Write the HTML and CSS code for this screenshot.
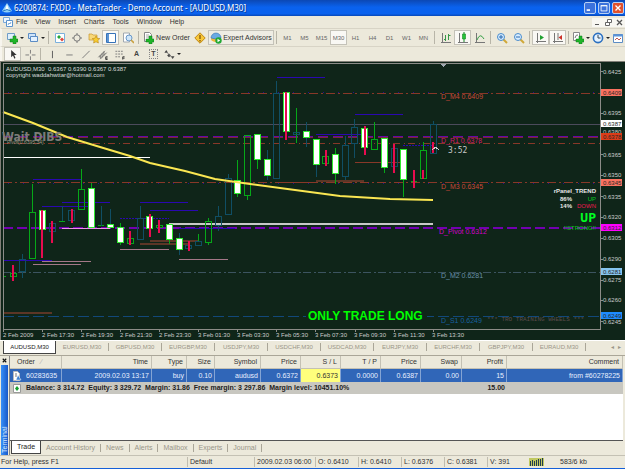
FILE: index.html
```html
<!DOCTYPE html>
<html lang="en">
<head>
<meta charset="utf-8">
<title>6200874: FXDD - MetaTrader - Demo Account - [AUDUSD,M30]</title>
<link rel="stylesheet" href="styles.css">
</head>
<body>
<div class="app">
  <header class="titlebar">
    <svg class="logo" viewBox="0 0 10 10"><path d="M5 0L10 8Q5 11 0 8Z" fill="#8fd0f8"/><path d="M5 1L7 7H3Z" fill="#fff"/><path d="M1 8Q5 5 9 8" stroke="#2878c0" fill="none"/></svg>
    <h1>6200874: FXDD - MetaTrader - Demo Account - [AUDUSD,M30]</h1>
    <button class="win" aria-label="Minimize"><svg viewBox="0 0 12 12"><path d="M2 8.500h4" stroke="#fff" stroke-width="2"/></svg></button>
    <button class="win" aria-label="Maximize"><svg viewBox="0 0 12 12"><path d="M2.500 3h7v6.500h-7zM2 3.500h8" stroke="#fff" fill="none"/></svg></button>
    <button class="win close" aria-label="Close"><svg viewBox="0 0 12 12"><path d="M3 3l6 6M9 3l-6 6" stroke="#fff" stroke-width="1.600"/></svg></button>
  </header>

  <nav class="menu">
    <svg class="docicon" viewBox="0 0 10 10"><path d="M.5.500h6v5h-6z" fill="#eef6ff" stroke="#7aa8d8"/><path d="M3.500 3.500h6v6h-6z" fill="#fff" stroke="#5c94cc"/><path d="M5 8l1-2 1 1 1-2" stroke="#78a8d8" fill="none"/></svg>
    <button>File</button><button>View</button><button>Insert</button><button>Charts</button><button>Tools</button><button>Window</button><button>Help</button>
    <span class="docwin">
      <button aria-label="Minimize chart"><svg viewBox="0 0 9 9"><path d="M2 6.500h4" stroke="#555"/></svg></button>
      <button aria-label="Restore chart"><svg viewBox="0 0 9 9"><path d="M3.500 1.500h4v3h-4zM1.500 4.500h4v3h-4z" stroke="#666" fill="#fff"/></svg></button>
      <button aria-label="Close chart"><svg viewBox="0 0 9 9"><path d="M2 2l5 5M7 2l-5 5" stroke="#555" stroke-width="1.300"/></svg></button>
    </span>
  </nav>

  <div class="toolbar">
    <button class="drop" aria-label="New chart"><svg viewBox="0 0 12 12"><path d="M1.500 1.500h7v6h-7z" fill="#dff0fc" stroke="#6f9cc8"/><path d="M4 7h3V4h3v3h2v3h-2v2H7v-2H4z" fill="#1fb428" stroke="#0c7a18" stroke-width=".5"/></svg><i></i></button>
    <button class="drop" aria-label="Profiles"><svg viewBox="0 0 12 12"><path d="M1.500 1.500h7v5h-7z" fill="#cfe4fa" stroke="#5b8cc4"/><path d="M3.500 4.500h7v5h-7z" fill="#e4f1ff" stroke="#5b8cc4"/></svg><i></i></button>
    <span class="sep"></span>
    <button aria-label="Market watch"><svg viewBox="0 0 12 12"><path d="M1.500 1.500h9v9h-9z" fill="#fff" stroke="#7ab0dc"/><path d="M3 5l2-2 2 2-2 2z" fill="#25a63a"/><path d="M6 7.500l2-2 2 2-2 2z" fill="#e0483c"/></svg></button>
    <button aria-label="Data window"><svg viewBox="0 0 12 12"><path d="M6 1v10M1 6h10" stroke="#777"/><circle cx="6" cy="6" r="3.200" fill="#ece9dc" stroke="#777"/></svg></button>
    <button aria-label="Navigator"><svg viewBox="0 0 12 12"><path d="M1 2h3l1 1h4v5H1z" fill="#f8d878" stroke="#c89830" stroke-width=".7"/><path d="M8 4l1.200 2.300 2.600.3-1.900 1.800.5 2.600L8 9.800 5.600 11l.5-2.600-1.900-1.800 2.600-.3z" fill="#f8cc30" stroke="#b98414" stroke-width=".6"/></svg></button>
    <button class="on" aria-label="Terminal"><svg viewBox="0 0 12 12"><path d="M1.500 1.500h9v9h-9z" fill="#fff" stroke="#3672b8"/><path d="M2 2h2v8H2z" fill="#5c94d4"/></svg></button>
    <button aria-label="Strategy tester"><svg viewBox="0 0 12 12"><path d="M1.500 1v9h6V1z" fill="#fff" stroke="#a0a8b0"/><circle cx="7" cy="6" r="3" fill="#cfe6fa" stroke="#6a98c8"/><path d="M9 8l3 3" stroke="#c8a040" stroke-width="1.600"/></svg></button>
    <span class="sep"></span>
    <button class="order"><svg viewBox="0 0 12 12"><path d="M2.500.500h5l2 2v7h-7z" fill="#fff" stroke="#888"/><path d="M4 3h3M4 5h3" stroke="#aaa"/><path d="M4 7h3V4h3v3h2v3h-2v2H7v-2H4z" fill="#1fb428" stroke="#0c7a18" stroke-width=".5"/></svg>New Order</button>
    <button aria-label="MetaEditor"><svg viewBox="0 0 12 12"><path d="M6 .8L11.200 6 6 11.200.8 6z" fill="#f8c838" stroke="#c08818"/><path d="M6 3v4M6 8v1.500" stroke="#8a5c10" stroke-width="1.400"/></svg></button>
    <button class="expert on"><svg viewBox="0 0 12 12"><ellipse cx="6" cy="7" rx="5" ry="3" fill="#f0b838"/><path d="M1 6a5 5 0 0 1 10 0q-5 2-10 0" fill="#6aaae4" stroke="#3872b4" stroke-width=".6"/><circle cx="8.500" cy="8.500" r="3.200" fill="#22a834"/><path d="M7.500 6.800v3.400l2.700-1.700z" fill="#fff"/></svg>Expert Advisors</button>
    <span class="sep"></span>
    <button class="tf">M1</button><button class="tf">M5</button><button class="tf">M15</button><button class="tf on">M30</button><button class="tf">H1</button><button class="tf">H4</button><button class="tf">D1</button><button class="tf">W1</button><button class="tf">MN</button>
    <span class="sep"></span>
    <button aria-label="Bar chart"><svg viewBox="0 0 12 12"><path d="M2.500 1v10M1 10.500h10" stroke="#777"/><path d="M5.500 3v6M4 7.500h1.500M8.500 2v6M8.500 3.500h2" stroke="#389848" fill="none"/></svg></button>
    <button class="on" aria-label="Candlesticks"><svg viewBox="0 0 12 12"><path d="M2.500 1v10M1 10.500h10" stroke="#777"/><path d="M7 0v10" stroke="#148824"/><path d="M5.500 2h3v5h-3z" fill="#25c438" stroke="#148824" stroke-width=".6"/></svg></button>
    <button aria-label="Line chart"><svg viewBox="0 0 12 12"><path d="M2.500 1v10M1 10.500h10" stroke="#777"/><path d="M3 8Q6 0 10 7" stroke="#38a048" fill="none"/></svg></button>
    <span class="sep"></span>
    <button aria-label="Zoom in"><svg viewBox="0 0 12 12"><path d="M7 7l4 4" stroke="#d0a838" stroke-width="2"/><circle cx="5" cy="5" r="3.500" fill="#d8edff" stroke="#4a8ccc"/><path d="M3 5h4M5 3v4" stroke="#2868b0"/></svg></button>
    <button aria-label="Zoom out"><svg viewBox="0 0 12 12"><path d="M7 7l4 4" stroke="#d0a838" stroke-width="2"/><circle cx="5" cy="5" r="3.500" fill="#d8edff" stroke="#4a8ccc"/><path d="M3 5h4" stroke="#2868b0"/></svg></button>
    <span class="sep"></span>
    <button class="on" aria-label="Auto scroll"><svg viewBox="0 0 12 12"><path d="M2.500 1v10M1 9.500h10" stroke="#777"/><path d="M5 3l4 2.500L5 8z" fill="#20a030"/></svg></button>
    <button class="on" aria-label="Chart shift"><svg viewBox="0 0 12 12"><path d="M2.500 1v10M1 9.500h10M6 1v7" stroke="#777"/><path d="M10 3L6.500 5.500 10 8z" fill="#cc3028"/></svg></button>
    <span class="sep"></span>
    <button class="drop" aria-label="Indicators"><svg viewBox="0 0 12 12"><path d="M1.500.500h6v8h-6z" fill="#fff" stroke="#888"/><path d="M3 6q1-4 3-3" stroke="#777" fill="none"/><path d="M4 7h3V4h3v3h2v3h-2v2H7v-2H4z" fill="#1fb428" stroke="#0c7a18" stroke-width=".5"/></svg><i></i></button>
    <button class="drop" aria-label="Periods"><svg viewBox="0 0 12 12"><circle cx="6" cy="6" r="4.600" fill="#e4f2ff" stroke="#2c70c0" stroke-width="1.600"/><path d="M6 3v3h2.500" stroke="#345" fill="none"/></svg><i></i></button>
    <button class="drop" aria-label="Templates"><svg viewBox="0 0 12 12"><path d="M1.500 2.500h9v8h-9z" fill="#fff" stroke="#5c8cc4"/><path d="M1 3.500h10" stroke="#5c94d8" stroke-width="2"/><path d="M3 8l2-2 2 2 2-2" stroke="#c05850" fill="none"/></svg><i></i></button>
  </div>

  <div class="toolbar draw">
    <button class="on" aria-label="Cursor"><svg viewBox="0 0 12 12"><path d="M4 1v8l2-2 1.500 3.500 1.200-.6L7.300 6.500H10z" fill="#333"/></svg></button>
    <button aria-label="Crosshair"><svg viewBox="0 0 12 12"><path d="M6.500 1v4M6.500 8v4M1 6.500h4M8 6.500h4" stroke="#777"/></svg></button>
    <span class="sep"></span>
    <button aria-label="Vertical line"><svg viewBox="0 0 12 12"><path d="M6.500 2v8" stroke="#555"/></svg></button>
    <button aria-label="Horizontal line"><svg viewBox="0 0 12 12"><path d="M3 6.500h7" stroke="#777"/></svg></button>
    <button aria-label="Trendline"><svg viewBox="0 0 12 12"><path d="M2 10l8-8" stroke="#777"/></svg></button>
    <button aria-label="Channel"><svg viewBox="0 0 12 12"><path d="M1 9l7-7M3 11l7-7M3 7v3M5 5v4M7 3v4" stroke="#666" fill="none"/><path d="M11 8.500H9v3h2M9 10h2" stroke="#333" fill="none"/></svg></button>
    <button aria-label="Fibonacci"><svg viewBox="0 0 12 12"><path d="M1 2.500h9M1 5.500h9M1 8.500h6" stroke="#777" stroke-dasharray="2 1"/><path d="M11 8.500H9v3M9 10h2" stroke="#333" fill="none"/></svg></button>
    <button class="letter" aria-label="Text">A</button>
    <button class="letter" aria-label="Text label"><span class="boxed">T</span></button>
    <button class="drop" aria-label="Arrows"><svg viewBox="0 0 12 12"><path d="M3 1l2 3H1zM6 5l2 2-2 2-2-2zM10 11L8 8h4z" fill="#444"/><path d="M4 4l5 5" stroke="#777"/></svg><i></i></button>
  </div>

  <main class="chart">
    <svg viewBox="0 61 625 279" role="img" aria-label="AUDUSD M30 candlestick chart">
      <path class="bg" d="M0 61h625v279H0z"/>
      <path class="edge" d="M.5 61v279M0 61.500h625"/>
      <g class="levels">
        <path class="red" stroke-dasharray="9 3 2 3" d="M3 93.500h597M3 182.500h597"/>
        <path class="blue dim" stroke-dasharray="1 14" d="M8 92.500h592M8 183.500h592"/>
        <path class="bid" d="M3 124.500h597"/>
        <path class="violet" stroke-dasharray="10 5" d="M3 136.500h597"/>
        <path class="maroon" stroke-dasharray="10 5" d="M3 137.500h597"/>
        <path class="red" stroke-dasharray="7 4 1 3" d="M3 143.500h597"/>
        <path class="violet strong" stroke-dasharray="10 4" d="M3 228h597"/>
        <path class="slate" stroke-dasharray="8 3 2 2" d="M3 272.500h597"/>
        <path class="steel" stroke-dasharray="11 4" d="M3 316.500h597"/>
      </g>
      <g class="signals">
        <path class="blue" d="M33 179.500h48M42 206.500h49M62 202.500h48M3 260.500h49M140 202.500h48M150 210.500h48M277 77.500h48M316 134.500h48M355 114.500h48M179 228.500h56"/>
        <path class="blue" stroke-dasharray="2 1" d="M120 218.500h49M403 145.500h30"/>
        <path class="mauve" d="M42 261.500h49M33 264.500h48M120 249.500h49M179 259.500h49"/>
        <path class="brown" d="M3 313h49M140 244h48M150 241h48M316 181h48"/>
        <path class="red" d="M355 162.500h48M277 182.500h39"/>
        <path class="pink" d="M62 228.500h48"/>
        <path class="white" d="M3 157.500h147"/>
        <path class="silver" d="M169 224h264"/>
      </g>
      <g class="candles">
        <path class="up" d="M3.500 264v45M3 276.500h3M32.500 184v28M29.500 212.500h6v46h-6zM10.500 273.500h6v3h-6zM59 221.500h6M81.500 169v20M78.500 189.500h6v20h-6zM98 225.500h6M127.500 238.500h6v5h-6zM156.500 225.500h6v2h-6zM195.500 245.500h6M198.500 234v7M205.500 221.500h6v21h-6zM208.500 218v3M208.500 243v2M225 178.500h6M225 214.500h6M244.500 135.500h6v60h-6zM247.500 196v4M273.500 93.500h6M273.500 178.500h6M296.500 108v35M322.500 156.500h6v7h-6zM371.500 139.500h6v10h-6zM374.500 122v17M410.500 181.500h6M420.500 150.500h6v28h-6zM423.500 142v8M430.500 124.500h6"/>
        <path class="teal" d="M22.500 254v5M22.500 272v6M19.500 259.500h6v12h-6zM49.500 223.500h6v8h-6zM62.500 206v15M68.500 210.500h6v10h-6zM101.500 206v20M110.500 209v19M140.500 206v12M137.500 218.500h6v21h-6zM185.500 245.500h6v3h-6zM195.500 241.500h6v4h-6zM218.500 206v10M218.500 225v6M215.500 216.500h6v9h-6zM228.500 174v4M225.500 178.500h6v36h-6zM276.500 81v12M273.500 93.500h6v85h-6zM293.500 132.500h6v2h-6zM306.500 122v25M316.500 165v12M342.500 145.500h6v31h-6zM345.500 136v9M345.500 176v4M351.500 127.500h6v16h-6zM354.500 119v8M354.500 144v14M391.500 148.500h6v18h-6zM413.500 177v7M430.500 124.500h6v29h-6zM433.500 121v3M179.500 233v22M267.500 150v30"/>
        <path class="up" d="M91.500 183v5M120.500 223v22M169.500 240v4M237.500 160v37M257.500 160v9M335.500 148v36M384.500 167v6M403.500 180v17M286.500 92v40"/>
        <path class="down" d="M88.500 188.500h6v39h-6zM39.500 210.500h6v19h-6zM107.500 224.500h6v3h-6zM117.500 227.500h6v15h-6zM146.500 216.500h6v12h-6zM166.500 224.500h6v15h-6zM176.500 238.500h6v11h-6zM234.500 180.500h6v13h-6zM254.500 134.500h6v25h-6zM264.500 159.500h6v16h-6zM283.500 92.500h6v39h-6zM303.500 131.500h6v6h-6zM313.500 139.500h6v25h-6zM332.500 154.500h6v19h-6zM361.500 128.500h6v19h-6zM381.500 138.500h6v29h-6zM400.500 149.500h6v30h-6z"/>
        <path class="alert" d="M13 265v16M42 210v48M52 221v22M72 209v14M130 231v14M150 214v23M159 220v13M189 241v10M286 92v48M326 150v16M365 126v29M394 144v29M414 170v18M423 170v9M433 142v11"/>
      </g>
      <path class="average" d="M3 112L33 123 67 137 100 147 130 156 150 163 185 171 215 179 250 184 280 188 310 192 340 196 390 199 433 200"/>
      <path class="axis" d="M3.500 329V63.500H600.500V329.500H3M600 71.500h3M600 113.500h3M600 154.500h3M600 175.500h3M600 196.500h3M600 217.500h3M600 238.500h3M600 259.500h3M600 280.500h3M600 300.500h3M600 321.500h3M3.500 329v3M42.500 329v3M81.500 329v3M120.500 329v3M159.500 329v3M198.500 329v3M237.500 329v3M276.500 329v3M315.500 329v3M355.500 329v3M394.500 329v3M433.500 329v3"/>
      <path d="M441 64h5l-2.500 3z" fill="#a0a8b0"/>
      <g class="info">
        <text x="6" y="71">AUDUSD,M30&#160; 0.6367 0.6390 0.6367 0.6387</text>
        <text x="6" y="77">copyright waddahwttar@hotmail.com</text>
      </g>
      <text class="dibs" x="2" y="141">Wait DIBS</text>
      <text class="pips" x="7" y="144">Pivot(0.6395,34)</text>
      <g class="pivots">
        <text class="salmon" x="441" y="99">D_M4 0.6409</text>
        <text class="crimson" x="441" y="143">D_R1 0.6378</text>
        <text class="salmon" x="441" y="189">D_M3 0.6345</text>
        <text class="magenta" x="439" y="234">D_Pivot 0.6312</text>
        <text class="slatetext" x="441" y="278">D_M2 0.6281</text>
        <text class="steeltext" x="441" y="323">D_S1 0.6249</text>
      </g>
      <path d="M432 150l4-3 3 3M436 147v2" stroke="#ccc" fill="none"/>
      <text class="clock" x="448" y="153">3:52</text>
      <g class="trend">
        <text x="596" y="193">rPanel_TREND</text>
        <text x="572" y="201">86%</text><text class="lime" x="596" y="201">UP</text>
        <text x="572" y="208">14%</text><text class="rose" x="596" y="208">DOWN</text>
        <text class="big" x="596" y="222">UP</text>
        <text class="lime" x="596" y="230">!!STRONG!!</text>
      </g>
      <text class="wheels" x="487" y="321">*** TRO TRAINING WHEELS ***</text>
      <path class="bg" d="M306 310h121v12H306z"/>
      <text class="only" x="308" y="320">ONLY TRADE LONG</text>
      <g class="scale">
        <text x="603" y="74">0.6425</text><text x="603" y="115">0.6395</text><text x="603" y="134">0.6380</text><text x="603" y="157">0.6365</text><text x="603" y="177">0.6350</text><text x="603" y="199">0.6335</text><text x="603" y="219">0.6320</text><text x="603" y="240">0.6305</text><text x="603" y="261">0.6290</text><text x="603" y="282">0.6275</text><text x="603" y="302">0.6260</text><text x="603" y="324">0.6245</text>
        <path fill="#fa7260" d="M601 89h21v7h-21zM601 179h21v7h-21z"/>
        <path fill="#fff" d="M601 120h21v7h-21z"/>
        <path fill="#dc3c18" d="M601 133h21v7h-21z"/>
        <path fill="#f0f" d="M601 224h21v7h-21z"/>
        <path fill="#86c4f0" d="M601 268h21v7h-21z"/>
        <path fill="#1e8cff" d="M601 312h21v7h-21z"/>
        <g class="tags"><text x="603" y="95">0.6409</text><text x="603" y="126">0.6387</text><text x="603" y="139">0.6378</text><text x="603" y="185">0.6345</text><text x="603" y="230">0.6312</text><text x="603" y="274">0.6281</text><text x="603" y="318">0.6249</text></g>
        <text x="3" y="337">2 Feb 2009</text><text x="42" y="337">2 Feb 17:30</text><text x="81" y="337">2 Feb 19:30</text><text x="120" y="337">2 Feb 21:30</text><text x="159" y="337">2 Feb 23:30</text><text x="198" y="337">3 Feb 01:30</text><text x="237" y="337">3 Feb 03:30</text><text x="276" y="337">3 Feb 05:30</text><text x="315" y="337">3 Feb 07:30</text><text x="354" y="337">3 Feb 09:30</text><text x="393" y="337">3 Feb 11:30</text><text x="432" y="337">3 Feb 13:30</text>
      </g>
    </svg>
  </main>

  <nav class="charttabs">
    <button class="active">AUDUSD,M30</button><button>EURUSD,M30</button><button>GBPUSD,M30</button><button>EURGBP,M30</button><button>USDJPY,M30</button><button>USDCHF,M30</button><button>USDCAD,M30</button><button>EURJPY,M30</button><button>EURCHF,M30</button><button>GBPJPY,M30</button><button>EURAUD,M30</button>
    <span class="scroll"><button aria-label="Scroll left">◂</button><button aria-label="Scroll right">▸</button></span>
  </nav>

  <section class="terminal">
    <aside class="side"><button aria-label="Close terminal"><svg viewBox="0 0 8 8"><path d="M2 2l4 4M6 2l-4 4" stroke="#111" stroke-width="1.300"/></svg></button><span>Terminal</span></aside>
    <div class="panel">
      <table>
        <colgroup><col class="c52"><col class="c90"><col class="c35"><col class="c28"><col class="c46"><col class="c40"><col class="c40"><col class="c40"><col class="c40"><col class="c41"><col class="c45"><col></colgroup>
        <thead><tr><th class="first">Order <span class="sort">∕</span></th><th>Time</th><th>Type</th><th>Size</th><th>Symbol</th><th>Price</th><th>S / L</th><th>T / P</th><th>Price</th><th>Swap</th><th>Profit</th><th>Comment</th></tr></thead>
        <tbody>
          <tr class="trade"><td class="first"><svg viewBox="0 0 10 10"><path d="M1.500.500h4l2 2v7h-6z" fill="#fff" stroke="#bbb"/><path d="M3 3h2M3 5h2" stroke="#777"/><path d="M6 4l3 5H4z" fill="#3c80d0" stroke="#fff" stroke-width=".5"/></svg>60283635</td><td>2009.02.03 13:17</td><td>buy</td><td>0.10</td><td>audusd</td><td>0.6372</td><td class="stop">0.6373</td><td>0.0000</td><td>0.6387</td><td>0.00</td><td>15</td><td>from #60278225</td></tr>
          <tr class="balance"><td class="first" colspan="10"><svg viewBox="0 0 10 10"><path d="M1.500 1.500h7v8h-7z" fill="#fff" stroke="#999"/><path d="M5 3l2 2.500L5 8 3 5.500z" fill="#18a030"/></svg>Balance: 3 314.72&#160; Equity: 3 329.72&#160; Margin: 31.86&#160; Free margin: 3 297.86&#160; Margin level: 10451.10%</td><td>15.00</td><td></td></tr>
        </tbody>
      </table>
      <div class="blank"></div>
      <nav class="termtabs"><button class="active">Trade</button><button>Account History</button><button>News</button><button>Alerts</button><button>Mailbox</button><button>Experts</button><button>Journal</button></nav>
    </div>
  </section>

  <footer class="status">
    <span class="help">For Help, press F1</span><span class="profile">Default</span><span class="date">2009.02.03 06:00</span><span class="ohlc">O: 0.6410</span><span class="ohlc">H: 0.6410</span><span class="ohlc">L: 0.6376</span><span class="ohlc">C: 0.6381</span><span class="vol">V: 391</span>
    <svg class="net" viewBox="0 0 15 8"><path d="M0 0h15v8H0z" fill="#c0c860"/><path d="M1.500 8V3M3.500 8V2M5.500 8V3M7.500 8V2M9.500 8V1M11.500 8V1M13.500 8V0" stroke="#203c50"/></svg>
    <span class="traffic">583/6 kb</span>
  </footer>
</div>
</body>
</html>
```
FILE: styles.css
```css
* { box-sizing: border-box; }
html, body { margin: 0; height: 100%; overflow: hidden; }
body { background: #ece9db; color: #333; font: 7px/8px "Liberation Sans", Arial, sans-serif; }
button { border: 0; margin: 0; padding: 0; background: none; color: inherit; font: inherit; white-space: nowrap; }
svg { display: block; flex: none; }
.app { display: flex; flex-direction: column; min-height: 100%; border-bottom: 1px solid #1560d8; }

.titlebar { display: flex; align-items: center; height: 16px; padding: 0 1px 0 2px; gap: 2px; background: linear-gradient(#0c48b4, #0a62ee 45%, #0a62ee 85%, #0848b8); color: #fff; }
.titlebar h1 { flex: 1; margin: 0; font: 8px/12px "Noto Sans", sans-serif; text-shadow: 1px 1px #0a3a90; }
.logo { width: 10px; height: 10px; }
.win { width: 12px; height: 12px; border: 1px solid #b8d0f4; border-radius: 2px; background: #3c72dc; }
.win svg { width: 10px; height: 10px; }
.win.close { background: #e0502c; }

.menu { display: flex; align-items: center; gap: 8px; height: 12px; padding-left: 3px; }
.docicon { width: 10px; height: 10px; margin-right: -5px; }
.docwin { display: flex; gap: 2px; margin-left: auto; background: #f8f7f2; padding: 0 1px; }
.docwin svg { width: 9px; height: 9px; }

.toolbar { display: flex; height: 18px; padding: 1px 0 1px 2px; overflow: hidden; border-top: 1px solid #d8d4c6; border-left: 2px solid #f7f5ee; }
.toolbar button { display: flex; align-items: center; justify-content: center; flex: none; width: 17px; height: 15px; }
.toolbar svg { width: 12px; height: 12px; }
.toolbar .on { background: #f9f8f4; border: 1px solid #c4c2b8; }
.toolbar .drop { width: 21px; gap: 2px; }
.toolbar .drop:nth-last-child(-n+3) { width: 20px; }
.drop i { border: 2px solid transparent; border-top-color: #222; border-bottom: 0; }
.sep { flex: none; width: 1px; margin: 1px 2px; background: #b8b5a8; }
.toolbar .order { width: 50px; gap: 2px; }
.toolbar .expert { width: 66px; gap: 1px; background: #efede4; }
.toolbar .tf { color: #666; font-size: 6px; }
.toolbar.draw { height: 15px; padding-top: 0; padding-bottom: 0; }
.toolbar.draw button { height: 14px; }
.toolbar.draw svg { height: 11px; }
.letter { color: #444; font-weight: bold; }
.boxed { padding: 0 1px; border: 1px dotted #888; }

.chart svg { width: 100%; height: auto; }
.bg { fill: #0f2519; }
.chart path { shape-rendering: crispEdges; }
.edge { stroke: #807e76; }
.levels path, .signals path, .candles path { fill: none; }
.red { stroke: #883828; }
.blue { stroke: #2a08b0; }
.dim { opacity: .8; }
.bid { stroke: #4c4b5c; }
.violet { stroke: #6408a8; }
.violet.strong { stroke: #7200b0; stroke-width: 2; }
.maroon { stroke: #7c2838; }
.slate { stroke: #3c5460; }
.steel { stroke: #12487a; }
.mauve { stroke: #a47888; }
.brown { stroke: #5c3626; stroke-width: 2; }
.pink { stroke: #ee90e8; }
.white { stroke: #fff; }
.silver { stroke: #c8c8c8; stroke-width: 2; }
.up { stroke: #06a818; }
.teal { stroke: #104e64; }
.candles .down { stroke: #30e830; fill: #fff; }
.alert { stroke: #e80c50; stroke-width: 2; }
.chart .average { fill: none; stroke: #fae652; stroke-width: 2; shape-rendering: auto; }
.axis { fill: none; stroke: #8c8c88; }
.info { fill: #ddd; font-size: 6px; }
.pips { fill: #a09888; font-size: 5px; }
.dibs { fill: #7c7c78; font: bold 12px "DejaVu Sans Condensed", sans-serif; }
.pivots { font-size: 7px; }
.salmon { fill: #c84838; }
.crimson { fill: #d01868; }
.magenta { fill: #d000c8; }
.slatetext { fill: #6890a8; }
.steeltext { fill: #1860a0; }
.clock { fill: #c8c8c8; font: 8px "DejaVu Sans Mono", monospace; }
.trend { fill: #e8e8e8; text-anchor: end; font: bold 6px "Liberation Sans", sans-serif; }
.trend .lime { fill: #08c820; font-weight: normal; }
.rose { fill: #f01850; font-weight: normal; }
.trend .big { fill: #0f2; font: bold 13px "DejaVu Sans Mono", monospace; }
.wheels { fill: #5c4c4c; font: 6px "Liberation Mono", monospace; }
.only { fill: #0f0; font: bold 12px "Liberation Sans", sans-serif; }
.scale { fill: #ccc; font-size: 6px; }
.tags { fill: #282828; }

.charttabs { display: flex; align-items: center; height: 15px; padding: 0 4px 2px 3px; border-top: 1px solid #fff; color: #999587; font-size: 6px; }
.charttabs button { flex: none; width: 53px; border-right: 1px solid #aaa698; line-height: 8px; }
.charttabs .active { height: 13px; background: #fff; color: #222; border: 1px solid #444; border-top: 0; }
.scroll { display: flex; margin-left: auto; gap: 4px; }
.charttabs .scroll button { width: auto; border: 0; }

.terminal { display: flex; flex: 1; border-top: 1px solid #aaa698; padding-right: 2px; }
.side { display: flex; flex-direction: column; width: 8px; margin-right: 1px; padding-left: 1px; }
.side svg { width: 7px; height: 9px; }
.side span { flex: 1; background: linear-gradient(90deg, #1858c8, #3890f8); color: #d8e8ff; writing-mode: vertical-rl; transform: rotate(180deg); padding-top: 2px; line-height: 7px; }
.panel { display: flex; flex-direction: column; flex: 1; min-width: 0; border-left: 1px solid #888; }
table { width: 100%; table-layout: fixed; border-collapse: separate; border-spacing: 0; }
.c52 { width: 52px; } .c90 { width: 90px; } .c35 { width: 35px; } .c28 { width: 28px; } .c46 { width: 46px; } .c40 { width: 40px; } .c41 { width: 41px; } .c45 { width: 45px; }
th, td { height: 12px; padding: 0 2px; overflow: hidden; text-align: right; white-space: nowrap; font-weight: normal; }
th { height: 13px; padding-right: 3px; border-right: 1px solid #c4c1b4; border-bottom: 1px solid #c4c1b4; }
.first { text-align: left; }
th.first { padding-left: 7px; }
.sort { color: #aaa; padding-left: 4px; }
td.first svg { display: inline-block; width: 10px; height: 10px; margin-right: 4px; vertical-align: middle; }
.trade td { height: 13px; background: #3066b8; color: #e8f0ff; border-right: 1px solid #84a4d4; }
.trade .stop { background: #ffff7c; color: #333; }
.balance td { background: #c8c7c0; color: #222; font-weight: bold; }
.blank { flex: 1; background: #fff; border-bottom: 1px solid #555; }
.termtabs { display: flex; align-items: center; height: 13px; padding-left: 1px; margin-bottom: 1px; color: #99968a; }
.termtabs button { padding: 0 5px; border-right: 1px solid #aaa698; }
.termtabs .active { height: 13px; margin-top: -1px; background: #fff; color: #222; border: 1px solid #444; border-top: 0; }

.status { display: flex; align-items: center; height: 13px; padding-left: 1px; border-top: 1px solid #c4c1b4; white-space: nowrap; }
.status span { flex: none; padding: 1px 2px; }
.status span + span { border-left: 1px solid #c0bdb0; }
.status .help { flex: 1; padding-left: 0; }
.profile { width: 67px; }
.date { width: 61px; }
.ohlc { width: 43px; }
.vol { width: 42px; }
.net { width: 15px; height: 8px; }
.status .traffic { width: 81px; padding-left: 16px; }
```
